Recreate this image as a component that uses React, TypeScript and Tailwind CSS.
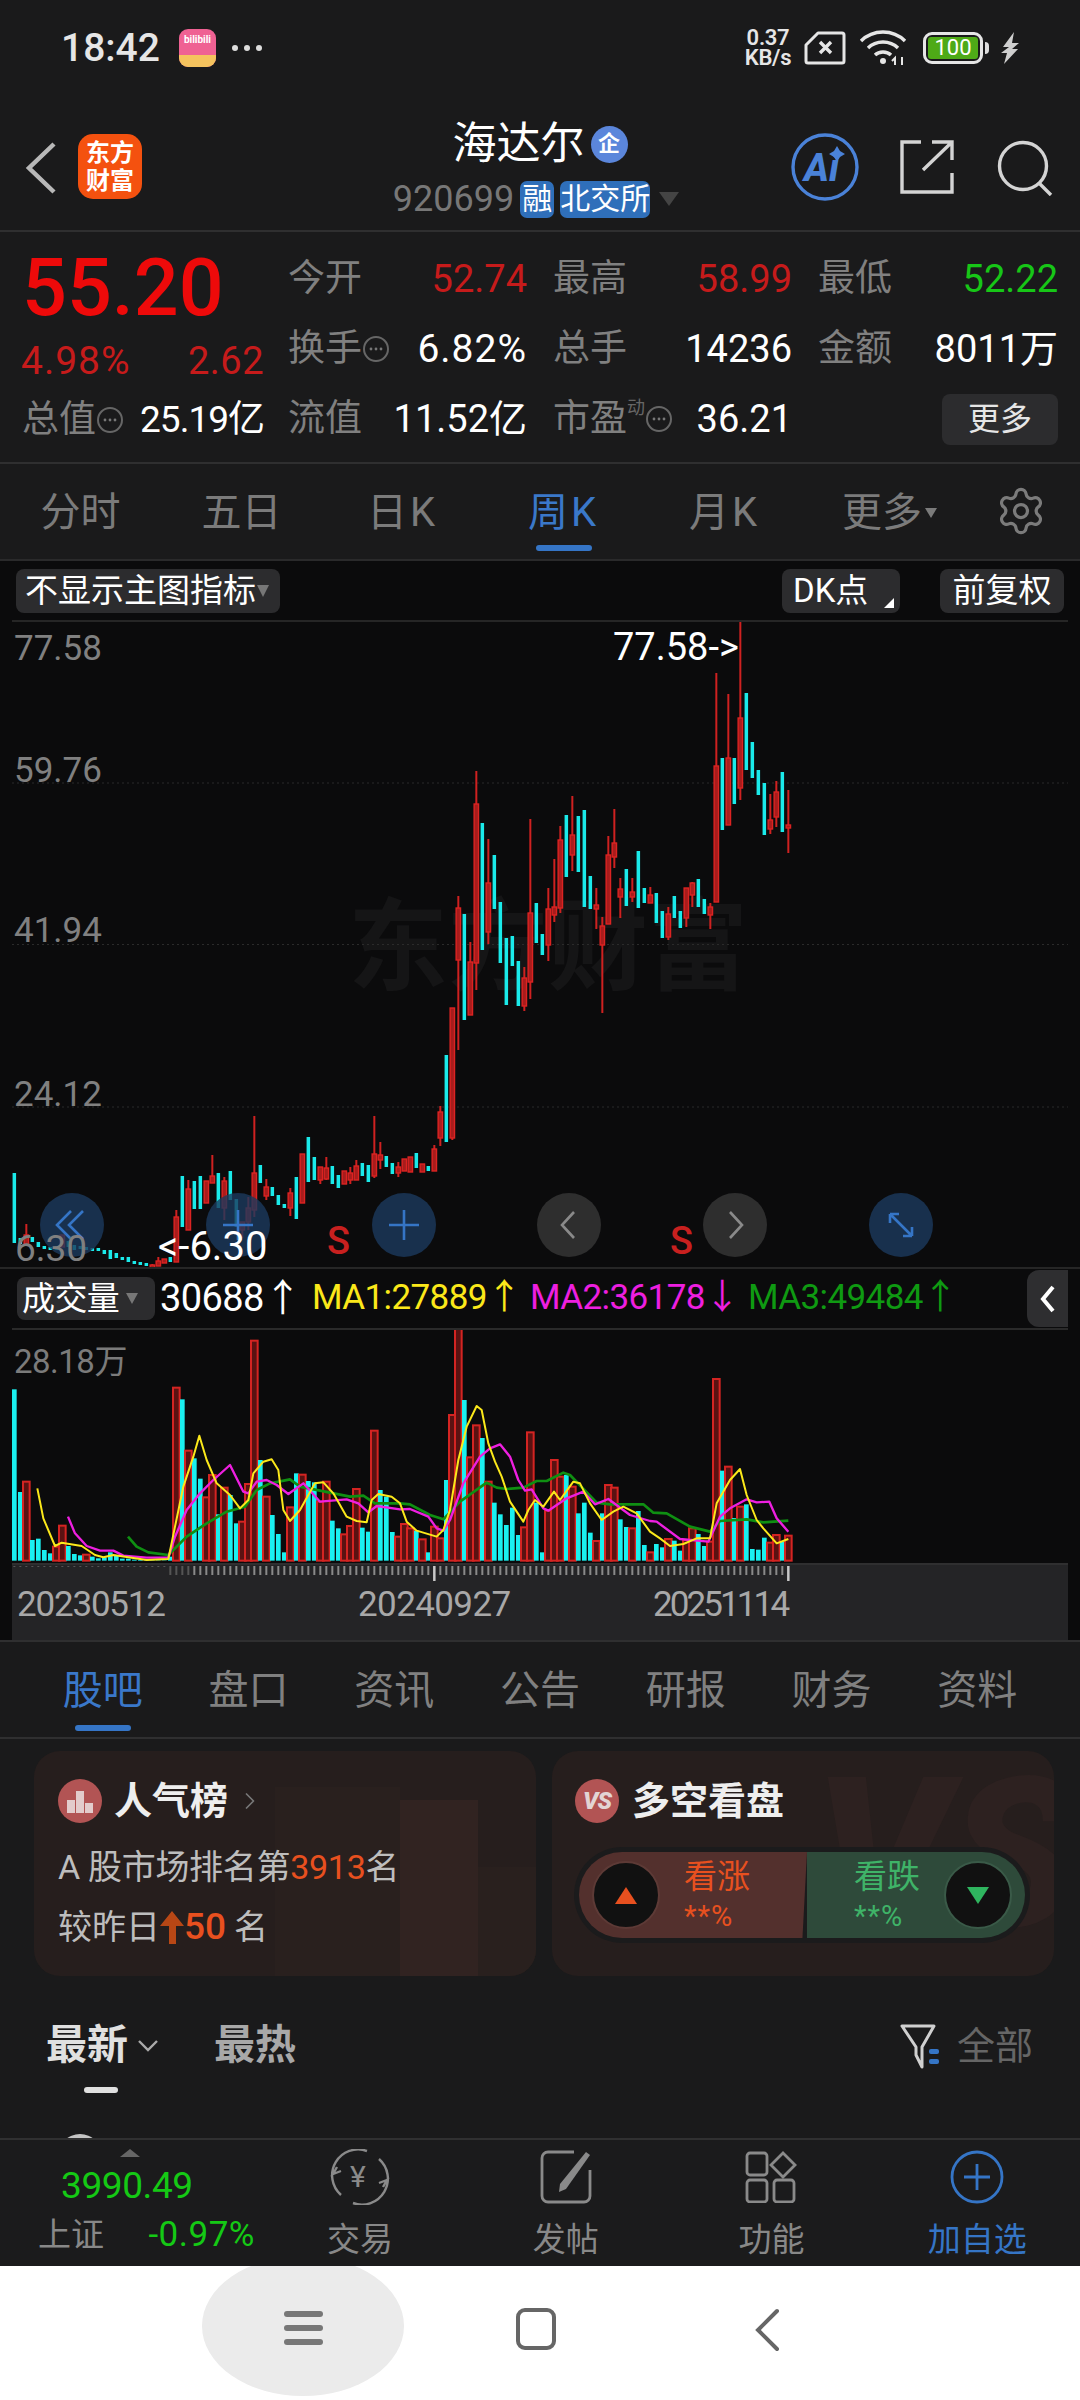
import { ChevronRight, Settings } from "lucide-react";

type Candle = [number, number, number, number, "r"] | [number, number, "c"];

const candles: Candle[] = [
  [1173, 1243, "c"], [1238, 1244, "c"], [1224, 1235, 1245, 1245, "r"], [1237, 1242, "c"], [1242, 1247, "c"],
  [1246, 1249, "c"], [1247, 1250, "c"], [1246, 1250, "c"], [1235, 1235, 1247, 1247, "r"], [1241, 1247, "c"],
  [1245, 1250, "c"], [1246, 1249, "c"], [1247, 1249, "c"], [1248, 1250, "c"], [1248, 1251, "c"],
  [1250, 1254, "c"], [1250, 1259, "c"], [1253, 1258, "c"], [1257, 1260, "c"], [1257, 1262, "c"],
  [1261, 1263, "c"], [1262, 1264, "c"], [1263, 1266, "c"], [1264, 1265, 1268, 1268, "r"], [1257, 1261, 1266, 1266, "r"],
  [1259, 1259, 1263, 1263, "r"], [1257, 1262, "c"], [1210, 1217, 1262, 1262, "r"], [1176, 1227, "c"], [1180, 1189, 1230, 1230, "r"],
  [1181, 1209, "c"], [1176, 1209, "c"], [1181, 1181, 1203, 1203, "r"], [1155, 1176, 1183, 1183, "r"], [1173, 1208, "c"],
  [1177, 1181, 1208, 1220, "r"], [1171, 1200, "c"], [1199, 1227, "c"], [1222, 1222, 1230, 1238, "r"], [1197, 1208, 1222, 1230, "r"],
  [1116, 1173, 1210, 1217, "r"], [1165, 1183, "c"], [1179, 1187, 1196, 1200, "r"], [1187, 1196, "c"], [1195, 1205, "c"],
  [1204, 1208, "c"], [1188, 1193, 1208, 1216, "r"], [1177, 1219, "c"], [1154, 1154, 1203, 1203, "r"], [1137, 1182, "c"],
  [1157, 1180, "c"], [1167, 1167, 1180, 1184, "r"], [1157, 1168, 1179, 1180, "r"], [1166, 1184, "c"], [1175, 1188, "c"],
  [1171, 1171, 1184, 1184, "r"], [1167, 1173, 1180, 1184, "r"], [1160, 1166, 1180, 1180, "r"], [1163, 1176, "c"], [1165, 1182, "c"],
  [1116, 1154, 1176, 1178, "r"], [1142, 1155, 1160, 1169, "r"], [1156, 1167, "c"], [1163, 1174, "c"], [1162, 1167, 1173, 1177, "r"],
  [1159, 1159, 1171, 1171, "r"], [1157, 1157, 1172, 1172, "r"], [1153, 1168, "c"], [1164, 1164, 1172, 1172, "r"], [1166, 1171, "c"],
  [1145, 1149, 1171, 1171, "r"], [1106, 1112, 1138, 1146, "r"], [1055, 1142, "c"], [1008, 1008, 1138, 1140, "r"], [896, 908, 960, 1050, "r"],
  [914, 1020, "c"], [942, 962, 1015, 1015, "r"], [771, 804, 963, 990, "r"], [823, 950, "c"], [839, 883, 932, 944, "r"],
  [855, 909, "c"], [902, 963, "c"], [938, 1005, "c"], [936, 966, "c"], [961, 1006, "c"],
  [967, 978, 1006, 1011, "r"], [819, 913, 982, 999, "r"], [903, 943, "c"], [934, 955, "c"], [888, 909, 945, 961, "r"],
  [859, 907, 915, 922, "r"], [826, 840, 908, 913, "r"], [815, 877, "c"], [796, 835, 855, 871, "r"], [816, 872, "c"],
  [810, 907, "c"], [876, 909, "c"], [888, 905, 909, 929, "r"], [917, 926, 945, 1013, "r"], [836, 855, 924, 924, "r"],
  [809, 843, 857, 868, "r"], [878, 889, 897, 918, "r"], [869, 906, "c"], [878, 892, 897, 902, "r"], [851, 908, "c"],
  [888, 903, "c"], [887, 895, 903, 903, "r"], [893, 923, "c"], [911, 938, "c"], [907, 914, 937, 940, "r"],
  [896, 918, "c"], [911, 928, "c"], [888, 888, 918, 927, "r"], [882, 883, 895, 907, "r"], [879, 907, "c"],
  [899, 914, "c"], [903, 907, 915, 929, "r"], [673, 766, 902, 902, "r"], [758, 830, "c"], [694, 758, 825, 825, "r"],
  [758, 804, "c"], [620, 718, 788, 800, "r"], [693, 770, "c"], [742, 778, "c"], [770, 795, "c"],
  [783, 835, "c"], [794, 820, 829, 834, "r"], [781, 792, 817, 827, "r"], [772, 832, "c"], [790, 825, 826, 853, "r"],
];

// bar tops in 3x volume-chart units
const volTops = [
  208, 516, 485, 660, 656, 690, 700, 680, 617, 678, 702, 706, 704, 710, 715, 712, 697, 705, 716, 716,
  719, 720, 721, 721, 721, 721, 710, 203, 238, 392, 415, 476, 532, 465, 583, 503, 525, 610, 605, 492,
  62, 420, 530, 585, 642, 697, 562, 460, 464, 483, 487, 545, 485, 602, 625, 643, 618, 507, 623, 635,
  332, 510, 530, 636, 650, 612, 625, 632, 658, 697, 620, 655, 480, 285, 25, 240, 412, 316, 354, 485,
  548, 583, 615, 563, 645, 622, 337, 548, 697, 572, 420, 470, 465, 500, 580, 548, 638, 663, 580, 495,
  503, 598, 621, 625, 573, 675, 697, 672, 682, 657, 662, 692, 660, 625, 642, 678, 665, 177, 452, 440,
  594, 560, 553, 687, 689, 653, 668, 645, 665, 647,
];
const volRed = new Set([
  2, 7, 8, 12, 27, 29, 32, 33, 35, 38, 39, 40, 42, 46, 48, 51, 52, 55, 56, 57, 60, 64, 65, 66, 68, 70, 71, 73, 74, 76, 77,
  79, 85, 86, 89, 90, 91, 93, 97, 99, 100, 103, 106, 109, 112, 113, 116, 117, 119, 121, 126, 127, 129,
]);

const yellow =
  "112,505 130,595 165,678 185,668 245,678 285,705 310,712 340,705 400,714 440,720 505,717 525,620 550,500 580,410 598,347 620,420 650,490 690,525 720,565 745,540 760,460 790,425 815,418 835,450 850,570 870,603 900,570 925,525 945,490 970,487 1000,520 1040,590 1070,603 1100,607 1115,540 1135,522 1175,530 1200,550 1220,605 1250,632 1310,650 1330,630 1350,570 1375,420 1400,320 1430,258 1445,270 1465,370 1485,425 1505,470 1530,545 1570,605 1585,570 1605,540 1630,560 1662,515 1680,540 1720,485 1740,490 1770,550 1805,600 1840,575 1870,560 1910,580 1950,635 1980,655 2010,678 2050,672 2090,655 2130,655 2150,550 2190,480 2220,447 2240,525 2270,600 2290,625 2330,670 2365,657";
const magenta =
  "204,590 225,640 260,678 300,692 340,692 370,707 440,713 505,713 525,650 560,570 600,520 640,480 690,435 730,515 745,520 770,485 800,480 830,495 865,522 910,490 960,545 1040,538 1075,550 1105,577 1130,558 1200,568 1230,567 1285,590 1310,625 1330,632 1350,600 1390,490 1440,410 1470,385 1500,373 1530,410 1555,480 1575,512 1595,508 1630,565 1645,572 1700,535 1750,515 1785,553 1825,537 1890,585 1950,603 1970,605 2040,657 2125,665 2160,590 2190,565 2240,538 2270,547 2308,545 2330,595 2365,635";
const green =
  "384,650 410,680 445,697 505,705 560,650 620,610 680,575 735,560 770,510 810,490 870,478 900,500 960,512 1050,530 1090,527 1125,550 1200,550 1230,553 1290,585 1330,598 1380,545 1460,488 1490,503 1520,507 1570,503 1610,483 1640,483 1690,458 1710,465 1790,548 1830,553 1930,553 1960,578 2000,580 2070,620 2130,635 2160,603 2240,598 2290,607 2365,602";

const barX = (i: number) => 14.33 + 6 * i;

function DotsCircle() {
  return (
    <svg width="28" height="28" viewBox="0 0 28 28" className="shrink-0">
      <circle cx="14" cy="14" r="12" fill="none" stroke="#666" strokeWidth="2" />
      <circle cx="9" cy="14" r="1.4" fill="#777" />
      <circle cx="14" cy="14" r="1.4" fill="#777" />
      <circle cx="19" cy="14" r="1.4" fill="#777" />
    </svg>
  );
}

function Quote({ label, value, color = "text-white", dots, sup, wide }: { label: string; value: string; color?: string; dots?: boolean; sup?: boolean; wide?: boolean }) {
  return (
    <div className="flex items-center justify-between h-[70px] text-[37px]">
      <div className="flex items-center text-[#808080]">
        <span>{label}</span>
        {sup && <span className="text-[18px] leading-none self-start mt-[8px] text-[#666]">动</span>}
        {dots && <DotsCircle />}
      </div>
      <span className={`${color} ${wide ? "text-[39px] tracking-[1px]" : "text-[38px]"}`}>{value}</span>
    </div>
  );
}

function MainChart() {
  return (
    <svg width="1056" height="645" viewBox="12 622 1056 645" className="block relative">
      {[783, 944.5, 1107].map((y) => (
        <line key={y} x1="12" x2="1068" y1={y} y2={y} stroke="#2b2b2b" strokeWidth="1" strokeDasharray="2 3" />
      ))}
      {candles.map((c, i) => {
        const x = barX(i);
        if (c.length === 3) {
          return <rect key={i} x={x - 1.75} y={c[0]} width="3.5" height={Math.max(c[1] - c[0], 3)} fill="#1aeaea" />;
        }
        return (
          <g key={i}>
            <line x1={x} x2={x} y1={c[0]} y2={c[3]} stroke="#cf2120" strokeWidth="2" />
            <rect x={x - 2.2} y={c[1]} width="4.4" height={Math.max(c[2] - c[1], 3)} fill="#a81c1c" stroke="#dc2322" strokeWidth="1.4" />
          </g>
        );
      })}
    </svg>
  );
}

function VolumeChart() {
  return (
    <svg width="1056" height="233" viewBox="36 30 3168 699" className="block">
      {volTops.map((top, i) => {
        const x = 43 + 18 * i;
        return volRed.has(i) ? (
          <rect key={i} x={x - 10} y={top} width="20" height={722 - top} fill="#5a1212" stroke="#d42422" strokeWidth="6" />
        ) : (
          <rect key={i} x={x - 7} y={top} width="14" height={722 - top} fill="#1af0f0" />
        );
      })}
      <polyline points={green} fill="none" stroke="#0f8f12" strokeWidth="8" strokeLinejoin="round" />
      <polyline points={magenta} fill="none" stroke="#ee1fe0" strokeWidth="7" strokeLinejoin="round" />
      <polyline points={yellow} fill="none" stroke="#fbe81a" strokeWidth="6" strokeLinejoin="round" />
    </svg>
  );
}

function TimeTicks() {
  return (
    <svg width="1056" height="20" viewBox="12 1563 1056 20" className="block">
      {candles.map((_, i) => {
        const x = barX(i);
        if (i === 70 || i === 129) return <line key={i} x1={x} x2={x} y1="1564" y2="1579" stroke="#c8c8c8" strokeWidth="2.5" />;
        return <line key={i} x1={x} x2={x} y1="1564" y2={i < 26 ? 1565 : 1573} stroke={i < 30 ? "#555" : "#8a8a8a"} strokeWidth="2" />;
      })}
    </svg>
  );
}

function RoundBtn({ kind }: { kind: "back" | "plus" | "left" | "right" | "full" }) {
  const blue = kind === "back" || kind === "plus" || kind === "full";
  return (
    <div className={`w-[64px] h-[64px] rounded-full flex items-center justify-center ${blue ? "bg-[#1c3a5ecc]" : "bg-[#2e2e2e]"}`}>
      <svg width="40" height="40" viewBox="0 0 40 40" fill="none" stroke={blue ? "#3575c6" : "#8a8a8a"} strokeWidth="2.6">
        {kind === "back" && <path d="M19 6 5 20l14 14M31 6 17 20l14 14" />}
        {kind === "plus" && <path d="M20 5v30M5 20h30" />}
        {kind === "left" && <path d="M25 7 13 20l12 13" />}
        {kind === "right" && <path d="m15 7 12 13-12 13" />}
        {kind === "full" && <path d="M9 9l22 22M9 9v9M9 9h9M31 31v-9M31 31h-9" />}
      </svg>
    </div>
  );
}

function StatusBar() {
  return (
    <div className="h-[90px] flex items-center pl-[61px] pr-[60px] pt-[6px] text-[#e6e6e6]">
      <span className="text-[39px] font-medium leading-none">18:42</span>
      <div className="ml-[19px] w-[37px] h-[38px] rounded-[9px] overflow-hidden flex flex-col bg-[#ef6193]">
        <span className="flex-1 text-[10px] font-bold leading-[22px] text-center text-white">bilibili</span>
        <span className="h-[12px] bg-[#f5c35e]" />
      </div>
      <div className="ml-[16px] flex gap-[6px]">
        <span className="w-[6px] h-[6px] rounded-full bg-[#ddd]" />
        <span className="w-[6px] h-[6px] rounded-full bg-[#ddd]" />
        <span className="w-[6px] h-[6px] rounded-full bg-[#ddd]" />
      </div>
      <div className="ml-auto w-[52px] text-[22px] font-semibold leading-[20px] text-center tracking-[-0.3px]">
        <div>0.37</div>
        <div>KB/s</div>
      </div>
      <svg width="42" height="34" viewBox="0 0 42 34" fill="none" stroke="#e6e6e6" strokeWidth="3" className="ml-[10px]">
        <path d="M14 2h24a2 2 0 0 1 2 2v26a2 2 0 0 1-2 2H4a2 2 0 0 1-2-2V14z" strokeLinejoin="round" />
        <path d="m16 11 11 11M27 11 16 22" strokeWidth="3.4" />
      </svg>
      <svg width="50" height="36" viewBox="0 0 50 36" fill="none" stroke="#e6e6e6" strokeWidth="3.4" className="ml-[13px]">
        <path d="M2 11C14-1 34-1 46 11M9 18c8-8 22-8 30 0M16 25c4-4 12-4 16 0" />
        <circle cx="24" cy="31" r="3" fill="#e6e6e6" stroke="none" />
        <path d="M36 35v-7l-3 3M43 27v8" strokeWidth="2" />
      </svg>
      <div className="ml-[14px] w-[60px] h-[32px] rounded-[9px] border-[3px] border-[#e6e6e6] p-[2px] flex">
        <span className="flex-1 rounded-[3px] bg-[#4eaa17] text-[22px] leading-[21px] text-center text-white">100</span>
      </div>
      <span className="ml-[2px] w-[4px] h-[12px] rounded-r bg-[#ddd]" />
      <svg width="20" height="32" viewBox="0 0 20 32" fill="#cfcfcf" className="ml-[11px]">
        <path d="M14 0 3 15h6l-8 6h6L4 32l14-15h-6l7-6h-7z" />
      </svg>
    </div>
  );
}

function Header() {
  return (
    <header className="h-[142px] flex border-b-2 border-[#2f2f30] pt-[30px] pl-[25px]">
      <svg width="32" height="52" viewBox="0 0 32 52" fill="none" stroke="#b8b8b8" strokeWidth="4.5" className="mt-[22px]">
        <path d="M29 2 4 26l25 24" />
      </svg>
      <div className="ml-[21px] mt-[14px] w-[64px] h-[65px] rounded-[15px] bg-[#f4510f] flex flex-col items-center justify-center text-white text-[24px] leading-[28px] font-bold">
        <span>东方</span>
        <span>财富</span>
      </div>
      <div className="ml-[249px] w-[290px] flex flex-col items-center -mt-[2px]">
        <div className="flex items-center h-[52px] text-[44px] text-white">
          <span className="ml-[8px]">海达尔</span>
          <span className="ml-[6px] w-[37px] h-[37px] rounded-full bg-[#5b86db] flex items-center justify-center text-[22px] leading-none text-white font-bold">企</span>
        </div>
        <div className="flex items-center h-[40px] mt-[9px] text-[36px] text-[#777]">
          <span>920699</span>
          <span className="ml-[6px] w-[34px] h-[37px] rounded-[7px] bg-[#2f6fba] text-[#fff] text-[30px] leading-[36px] text-center">融</span>
          <span className="ml-[6px] w-[90px] h-[37px] rounded-[7px] bg-[#2f6fba] text-[#fff] text-[30px] leading-[36px] text-center">北交所</span>
          <span className="ml-[9px] w-0 h-0 border-x-[10px] border-x-transparent border-t-[14px] border-t-[#444]" />
        </div>
      </div>
      <svg width="68" height="68" viewBox="0 0 68 68" className="ml-[110px] mt-[13px] shrink-0">
        <circle cx="34" cy="34" r="32" fill="none" stroke="#4a82d8" strokeWidth="3.4" />
        <text x="13" y="48" fontSize="38" fontWeight="800" fontStyle="italic" fill="#4a82d8" fontFamily="Roboto">Ai</text>
        <path d="m46 13 3 5 5 3-5 3-3 5-3-5-5-3 5-3z" fill="#4a82d8" />
      </svg>
      <svg width="56" height="54" viewBox="0 0 56 54" fill="none" stroke="#d4d4d4" strokeWidth="3.4" className="ml-[40px] mt-[20px] shrink-0">
        <path d="M22 2H3v50h50V33" />
        <path d="M24 30 53 2M33 2h20v18" />
      </svg>
      <svg width="56" height="56" viewBox="0 0 56 56" fill="none" stroke="#d4d4d4" strokeWidth="3.4" className="ml-[42px] mt-[20px] shrink-0">
        <circle cx="26" cy="26" r="23.5" />
        <path d="m42 43 12 12" />
      </svg>
    </header>
  );
}

function QuoteBlock() {
  return (
    <section className="h-[232px] flex border-b-2 border-[#2f2f30]">
      <div className="w-[288px] pl-[22px] pr-[24px] pt-[12px]">
        <div className="h-[90px] text-[79px] leading-[88px] font-medium text-[#ee0a0a]">55.20</div>
        <div className="h-[54px] flex items-center justify-between text-[38px] text-[#c61b1b] -ml-[1px]">
          <span className="text-[39px] tracking-[1px]">4.98%</span>
          <span className="tracking-[0.5px]">2.62</span>
        </div>
        <div className="h-[64px] flex items-center justify-between text-[37px]">
          <div className="flex items-center text-[#808080]">
            <span>总值</span>
            <DotsCircle />
          </div>
          <span className="text-white tracking-[-1px]">25.19亿</span>
        </div>
      </div>
      <div className="flex-1 pt-[12px] grid grid-cols-[239px_239px_240px] gap-x-[26px] content-start">
        <Quote label="今开" value="52.74" color="text-[#c61b1b]" />
        <Quote label="最高" value="58.99" color="text-[#c61b1b]" />
        <Quote label="最低" value="52.22" color="text-[#17c617]" />
        <Quote label="换手" value="6.82%" dots wide />
        <Quote label="总手" value="14236" />
        <Quote label="金额" value="8011万" />
        <Quote label="流值" value="11.52亿" />
        <Quote label="市盈" value="36.21" dots sup />
        <div className="h-[70px] flex items-center justify-end">
          <span className="w-[116px] h-[51px] rounded-[8px] bg-[#2c2c2e] text-[#e6e6e6] text-[32px] leading-[50px] text-center">更多</span>
        </div>
      </div>
    </section>
  );
}

function PeriodTabs() {
  const tabs = ["分时", "五日", "日K", "周K", "月K"];
  return (
    <nav className="h-[97px] flex border-b-2 border-[#2a2a2b] text-[40px] text-[#7b7b7b]">
      {tabs.map((t) => (
        <div key={t} className={`w-[161px] relative flex items-center justify-center pt-[3px] ${t.endsWith("K") ? "tracking-[3px]" : ""} ${t === "周K" ? "text-[#3a78c9]" : ""}`}>
          {t}
          {t === "周K" && <span className="absolute bottom-[8px] left-[53px] w-[56px] h-[6px] rounded bg-[#3575c6]" />}
        </div>
      ))}
      <div className="w-[161px] flex items-center justify-center pl-[8px] pt-[3px]">
        更多
        <span className="ml-[3px] w-0 h-0 border-x-[6px] border-x-transparent border-t-[10px] border-t-[#7b7b7b]" />
      </div>
      <div className="flex-1 flex items-center justify-center pb-[2px] pr-[4px]">
        <Settings size={52} strokeWidth={1.5} color="#7b7b7b" />
      </div>
    </nav>
  );
}

function ChartToolbar() {
  return (
    <div className="h-[59px] flex items-center pl-[16px] pr-[16px] text-[33px] text-white">
      <div className="w-[264px] h-[44px] rounded-[8px] bg-[#2c2c2e] flex items-center pl-[9px]">
        <span>不显示主图指标</span>
        <span className="ml-[1px] w-0 h-0 border-x-[6px] border-x-transparent border-t-[12px] border-t-[#777]" />
      </div>
      <div className="ml-auto w-[118px] h-[44px] rounded-[8px] bg-[#2c2c2e] flex items-center pl-[11px] relative">
        <span>DK点</span>
        <span className="absolute right-[6px] bottom-[5px] w-0 h-0 border-l-[10px] border-l-transparent border-b-[10px] border-b-white" />
      </div>
      <div className="ml-[40px] w-[124px] h-[44px] rounded-[8px] bg-[#2c2c2e] flex items-center justify-center">前复权</div>
    </div>
  );
}

function CandleArea() {
  return (
    <div className="mx-[12px] h-[647px] relative border-t-2 border-[#262626] overflow-hidden">
      <div className="absolute left-[336px] top-[276px] text-[100px] font-bold leading-none text-[#151516]">东方财富</div>
      <MainChart />
      <div className="absolute inset-0 text-[35px] leading-none text-[#808080]">
        <span className="absolute left-[2px] top-[9px]">77.58</span>
        <span className="absolute left-[2px] top-[131px]">59.76</span>
        <span className="absolute left-[2px] top-[291px]">41.94</span>
        <span className="absolute left-[2px] top-[455px]">24.12</span>
        <span className="absolute left-[601px] top-[6px] text-[38px] text-white">77.58-&gt;</span>
      </div>
      <div className="absolute left-[28px] top-[571px] flex gap-[101.8px]">
        <RoundBtn kind="back" />
        <RoundBtn kind="plus" />
        <RoundBtn kind="plus" />
        <RoundBtn kind="left" />
        <RoundBtn kind="right" />
        <RoundBtn kind="full" />
      </div>
      <span className="absolute left-[3px] top-[608px] text-[37px] leading-none text-[#808080]">6.30</span>
      <span className="absolute left-[146px] top-[605px] text-[40px] leading-none text-white">&lt;-6.30</span>
      <span className="absolute left-[315px] top-[600px] text-[38px] leading-none font-medium text-[#c8201f]">S</span>
      <span className="absolute left-[658px] top-[600px] text-[38px] leading-none font-medium text-[#c8201f]">S</span>
    </div>
  );
}

function VolumeLegend() {
  return (
    <div className="h-[61px] flex items-center pl-[17px] text-[35px] tracking-[-0.6px] border-t-2 border-[#262626] relative">
      <div className="w-[138px] h-[43px] rounded-[8px] bg-[#2c2c2e] flex items-center pl-[5px] text-[33px] text-white shrink-0">
        成交量
        <span className="ml-[7px] w-0 h-0 border-x-[6px] border-x-transparent border-t-[11px] border-t-[#777]" />
      </div>
      <span className="ml-[5px] w-[152px] text-[38px] text-white">30688↑</span>
      <span className="w-[218px] text-[#fbe81a]">MA1:27889↑</span>
      <span className="w-[218px] text-[#ee1fe0]">MA2:36178↓</span>
      <span className="text-[#0f9a12]">MA3:49484↑</span>
      <div className="absolute right-[12px] top-[1px] w-[41px] h-[57px] rounded-l-[12px] bg-[#2e2e30] flex items-center justify-center">
        <svg width="20" height="30" viewBox="0 0 20 30" fill="none" stroke="#fff" strokeWidth="4">
          <path d="M15 3 5 15l10 12" />
        </svg>
      </div>
    </div>
  );
}

function VolumeArea() {
  return (
    <div className="mx-[12px] border-t-2 border-[#2a2a2a] relative">
      <VolumeChart />
      <span className="absolute left-[2px] top-[15px] text-[33px] leading-none tracking-[-0.5px] text-[#7b7b7b]">28.18万</span>
      <div className="h-[77px] bg-[#242426] border-t-2 border-[#2f2f30]">
        <TimeTicks />
        <div className="flex text-[35px] leading-none text-[#a8a8a8] mt-[2px]">
          <span className="ml-[5px] w-[341px] tracking-[-1.2px]">20230512</span>
          <span className="w-[295px] tracking-[-0.6px]">20240927</span>
          <span className="tracking-[-2.9px]">20251114</span>
        </div>
      </div>
    </div>
  );
}

function InfoTabs() {
  const tabs = ["股吧", "盘口", "资讯", "公告", "研报", "财务", "资料"];
  return (
    <nav className="h-[99px] flex pl-[30px] pr-[30px] border-y-2 border-[#2f2f30] text-[40px] text-[#808080]">
      {tabs.map((t, i) => (
        <div key={t} className={`flex-1 relative flex items-center justify-center pt-[2px] ${i === 0 ? "text-[#3a78c9]" : ""}`}>
          {t}
          {i === 0 && <span className="absolute bottom-[6px] left-[45px] w-[56px] h-[6px] rounded bg-[#3575c6]" />}
        </div>
      ))}
    </nav>
  );
}

function CardIcon({ vs }: { vs?: boolean }) {
  return (
    <div className="w-[44px] h-[44px] rounded-full bg-[#b25454] flex items-center justify-center shrink-0">
      {vs ? (
        <span className="text-[24px] font-black italic text-[#e3d4d4] tracking-[-1px] leading-none">VS</span>
      ) : (
        <svg width="28" height="24" viewBox="0 0 28 24" fill="#e3cccc">
          <rect x="1" y="11" width="8" height="13" />
          <rect x="10" y="2" width="8" height="22" />
          <rect x="19" y="14" width="8" height="10" />
        </svg>
      )}
    </div>
  );
}

function Cards() {
  return (
    <div className="flex gap-[16px] pl-[34px] pt-[12px] h-[237px]">
      <div className="w-[502px] shrink-0 h-[225px] rounded-[26px] bg-[#261e1d] relative overflow-hidden pl-[24px] pt-[28px]">
        <svg className="absolute left-0 top-0" width="502" height="225" viewBox="0 0 502 225">
          <rect x="241" y="36" width="125" height="189" fill="#29201e" />
          <rect x="366" y="49" width="78" height="176" fill="#312321" />
          <rect x="444" y="116" width="58" height="109" fill="#29201e" />
        </svg>
        <div className="relative flex items-center h-[44px]">
          <CardIcon />
          <span className="ml-[12px] text-[38px] font-bold text-[#eee]">人气榜</span>
          <ChevronRight size={28} color="#777" strokeWidth={1.5} className="ml-[8px]" />
        </div>
        <div className="relative mt-[14px] h-[60px] flex items-center text-[34px] tracking-[-0.3px] text-[#bdbdbd]">
          A 股市场排名第<span className="text-[#e8501f]">3913</span>名
        </div>
        <div className="relative h-[60px] flex items-center text-[34px] text-[#bdbdbd]">
          较昨日
          <svg width="24" height="34" viewBox="0 0 24 34" fill="#b84715">
            <path d="M12 1 24 16h-8v18H9V16H0z" />
          </svg>
          <span className="text-[#e8501f] text-[37px] font-medium">50</span>
          <span className="ml-[8px]">名</span>
        </div>
      </div>
      <div className="w-[502px] shrink-0 h-[225px] rounded-[26px] bg-[#261e1d] relative overflow-hidden pl-[23px] pt-[28px]">
        <span className="absolute left-[262px] -top-[2px] text-[210px] leading-none font-black italic text-[#2d2120]">VS</span>
        <div className="relative flex items-center h-[44px]">
          <CardIcon vs />
          <span className="ml-[13px] text-[38px] font-bold text-[#eee]">多空看盘</span>
        </div>
        <div className="relative mt-[24px] -ml-[1px] w-[456px] h-[96px] rounded-full bg-[#1b1b1c] p-[5px] flex">
          <div className="w-[228px] h-[86px] rounded-l-full bg-[#53302d] flex items-center [clip-path:polygon(0_0,100%_0,98%_100%,0_100%)]">
            <div className="ml-[13px] w-[68px] h-[68px] rounded-full bg-[#111] border-2 border-[#5d3a36] flex items-center justify-center">
              <span className="w-0 h-0 border-x-[11px] border-x-transparent border-b-[17px] border-b-[#e8501f]" />
            </div>
            <div className="ml-[24px] flex flex-col items-start">
              <span className="text-[33px] leading-[42px] text-[#e8501f]">看涨</span>
              <span className="text-[29px] leading-[36px] tracking-[1px] text-[#e8501f]">**%</span>
            </div>
          </div>
          <div className="w-[218px] h-[86px] rounded-r-full bg-[#2e4a3a] flex items-center justify-end">
            <div className="flex flex-col items-start">
              <span className="text-[33px] leading-[42px] text-[#3fb368]">看跌</span>
              <span className="text-[29px] leading-[36px] tracking-[1px] text-[#3fb368]">**%</span>
            </div>
            <div className="ml-[24px] mr-[13px] w-[68px] h-[68px] rounded-full bg-[#111] border-2 border-[#3a5a48] flex items-center justify-center">
              <span className="w-0 h-0 border-x-[11px] border-x-transparent border-t-[17px] border-t-[#2fb55f]" />
            </div>
          </div>
        </div>
      </div>
    </div>
  );
}

function FeedTabs() {
  return (
    <div className="h-[164px] relative overflow-hidden border-b-2 border-[#303031]">
      <div className="flex items-center pl-[46px] pr-[47px] pt-[41px] h-[99px]">
        <div className="relative flex items-center text-[41px] font-bold text-[#e0e0e0]">
          最新
          <svg width="22" height="14" viewBox="0 0 22 14" fill="none" stroke="#aaa" strokeWidth="2.4" className="ml-[9px]">
            <path d="m2 2 9 9 9-9" />
          </svg>
          <span className="absolute left-[38px] top-[72px] w-[34px] h-[6px] rounded bg-[#e0e0e0]" />
        </div>
        <span className="ml-[55px] text-[41px] font-bold text-[#a8a8a8]">最热</span>
        <svg width="44" height="46" viewBox="0 0 44 46" fill="none" className="ml-auto">
          <path d="M2 3h32L22 24v20l-6-12V24z" stroke="#d0d0d0" strokeWidth="3" strokeLinejoin="round" />
          <rect x="29" y="26" width="10" height="5" rx="2" fill="#3575c6" />
          <rect x="29" y="36" width="10" height="5" rx="2" fill="#3575c6" />
        </svg>
        <span className="ml-[13px] text-[38px] text-[#666]">全部</span>
      </div>
      <span className="absolute left-[58px] top-[158px] w-[44px] h-[44px] rounded-full bg-[#c4c4c4]" />
    </div>
  );
}

function NavItem({ label, active, children }: { label: string; active?: boolean; children: React.ReactNode }) {
  return (
    <div className={`w-[206px] flex flex-col items-center text-[33px] ${active ? "text-[#3575c6]" : "text-[#888]"}`}>
      <div className="h-[58px] mt-[8px] flex items-center">{children}</div>
      <span className="mt-[14px] leading-[40px]">{label}</span>
    </div>
  );
}

function BottomNav() {
  return (
    <div className="h-[126px] flex bg-[#1b1b1c] shrink-0">
      <div className="w-[257px] shrink-0 pl-[38px] pr-[2px] relative">
        <span className="absolute left-[120px] top-[9px] w-0 h-0 border-x-[10px] border-x-transparent border-b-[8px] border-b-[#666]" />
        <div className="pl-[23px] pt-[26px] text-[37px] leading-[40px] text-[#15c915] tracking-[-0.4px]">3990.49</div>
        <div className="flex items-center justify-between mt-[7px] leading-[44px]">
          <span className="text-[33px] text-[#888]">上证</span>
          <span className="text-[35px] tracking-[0.5px] text-[#15c915]">-0.97%</span>
        </div>
      </div>
      <NavItem label="交易">
        <svg width="62" height="56" viewBox="0 0 62 56" fill="none" stroke="#8a8a8a" strokeWidth="2.4">
          <path d="M38 2A26 26 0 0 0 12 46M8 18l-4 7 8-3M24 54a26 26 0 0 0 26-44M54 38l4-7-8 3" />
          <text x="21" y="38" fontSize="30" fill="#8a8a8a" stroke="none" fontFamily="Roboto">¥</text>
        </svg>
      </NavItem>
      <NavItem label="发帖">
        <svg width="52" height="54" viewBox="0 0 52 54" fill="none" stroke="#8a8a8a" strokeWidth="2.8">
          <path d="M34 2H8a6 6 0 0 0-6 6v38a6 6 0 0 0 6 6h36a6 6 0 0 0 6-6V20" />
          <path d="M20 34 46 2l4 3-24 34-7 3z" fill="#8a8a8a" stroke="none" />
        </svg>
      </NavItem>
      <NavItem label="功能">
        <svg width="52" height="52" viewBox="0 0 52 52" fill="none" stroke="#8a8a8a" strokeWidth="2.8">
          <rect x="2" y="2" width="20" height="22" rx="3" />
          <path d="m38 2 12 12-12 12-12-12z" />
          <rect x="2" y="29" width="20" height="22" rx="3" />
          <rect x="29" y="29" width="20" height="22" rx="3" />
        </svg>
      </NavItem>
      <NavItem label="加自选" active>
        <svg width="54" height="54" viewBox="0 0 54 54" fill="none" stroke="#3575c6" strokeWidth="2.8">
          <circle cx="27" cy="27" r="25" />
          <path d="M27 14v26M14 27h26" />
        </svg>
      </NavItem>
    </div>
  );
}

function SystemBar() {
  return (
    <div className="flex-1 min-h-0 bg-white overflow-hidden flex items-end">
      <div className="ml-[202px] mb-[4px] w-[202px] h-[140px] shrink-0 rounded-[50%] bg-[#ebebeb] flex flex-col items-center justify-center gap-[8px] pt-[4px]">
        <span className="w-[39px] h-[6px] rounded bg-[#777]" />
        <span className="w-[39px] h-[6px] rounded bg-[#777]" />
        <span className="w-[39px] h-[6px] rounded bg-[#777]" />
      </div>
      <div className="ml-[112px] mb-[50px] w-[40px] h-[42px] rounded-[9px] border-[4px] border-[#666]" />
      <svg width="26" height="44" viewBox="0 0 26 44" fill="none" stroke="#666" strokeWidth="4" strokeLinecap="round" className="ml-[198px] mb-[48px]">
        <path d="M23 3 4 22l19 19" />
      </svg>
    </div>
  );
}

export default function App() {
  return (
    <div className="w-[1080px] h-[2400px] flex flex-col overflow-hidden bg-[#1a1a1b] font-['Roboto','Noto_Sans_CJK_SC',sans-serif]">
      <StatusBar />
      <Header />
      <QuoteBlock />
      <PeriodTabs />
      <div className="bg-[#0b0b0c]">
        <ChartToolbar />
        <CandleArea />
        <VolumeLegend />
        <VolumeArea />
      </div>
      <InfoTabs />
      <Cards />
      <FeedTabs />
      <BottomNav />
      <SystemBar />
    </div>
  );
}
